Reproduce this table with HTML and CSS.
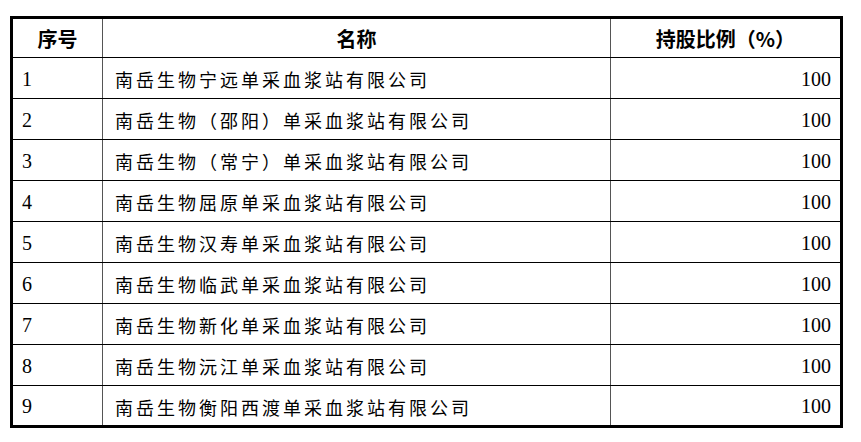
FILE: index.html
```html
<!DOCTYPE html>
<html lang="zh">
<head>
<meta charset="utf-8">
<link rel="stylesheet" href="styles.css">
</head>
<body>
<table class="tbl">
  <colgroup>
    <col class="c1"><col class="c2"><col class="c3">
  </colgroup>
  <thead>
    <tr><th>序号</th><th>名称</th><th>持股比例（%）</th></tr>
  </thead>
  <tbody>
    <tr><td class="num">1</td><td class="name">南岳生物宁远单采血浆站有限公司</td><td class="pct">100</td></tr>
    <tr><td class="num">2</td><td class="name">南岳生物（邵阳）单采血浆站有限公司</td><td class="pct">100</td></tr>
    <tr><td class="num">3</td><td class="name">南岳生物（常宁）单采血浆站有限公司</td><td class="pct">100</td></tr>
    <tr><td class="num">4</td><td class="name">南岳生物屈原单采血浆站有限公司</td><td class="pct">100</td></tr>
    <tr><td class="num">5</td><td class="name">南岳生物汉寿单采血浆站有限公司</td><td class="pct">100</td></tr>
    <tr><td class="num">6</td><td class="name">南岳生物临武单采血浆站有限公司</td><td class="pct">100</td></tr>
    <tr><td class="num">7</td><td class="name">南岳生物新化单采血浆站有限公司</td><td class="pct">100</td></tr>
    <tr><td class="num">8</td><td class="name">南岳生物沅江单采血浆站有限公司</td><td class="pct">100</td></tr>
    <tr><td class="num">9</td><td class="name">南岳生物衡阳西渡单采血浆站有限公司</td><td class="pct">100</td></tr>
  </tbody>
</table>
</body>
</html>
```
FILE: styles.css
```css
html, body {
  margin: 0;
  padding: 0;
  background: #ffffff;
}
body {
  padding: 16px 0 0 10px;
}
.tbl {
  border-collapse: collapse;
  table-layout: fixed;
  width: 830px;
  border: 3px solid #000;
  color: #000;
}
.c1 { width: 91px; }
.c2 { width: 508px; }
.c3 { width: 231px; }
.tbl th,
.tbl td {
  height: 41px;
  padding: 0;
  border-top: 1px solid #000;
  border-bottom: 1px solid #000;
  border-left: 1px solid #555;
  border-right: 1px solid #555;
  box-sizing: border-box;
  vertical-align: middle;
}
.tbl th {
  font-family: "Noto Sans CJK SC", sans-serif;
  font-weight: 700;
  font-size: 20px;
  text-align: center;
  height: 40px;
}
.tbl td.num {
  font-family: "Liberation Serif", serif;
  font-size: 20px;
  padding-left: 9px;
  padding-top: 2px;
}
.tbl td.name {
  font-family: "Noto Sans CJK SC", sans-serif;
  font-weight: 400;
  font-size: 18px;
  letter-spacing: 3px;
  padding-left: 12px;
  padding-top: 2px;
  white-space: nowrap;
}
.tbl td.pct {
  font-family: "Liberation Serif", serif;
  font-size: 20px;
  text-align: right;
  padding-right: 9px;
  padding-top: 2px;
}
```
